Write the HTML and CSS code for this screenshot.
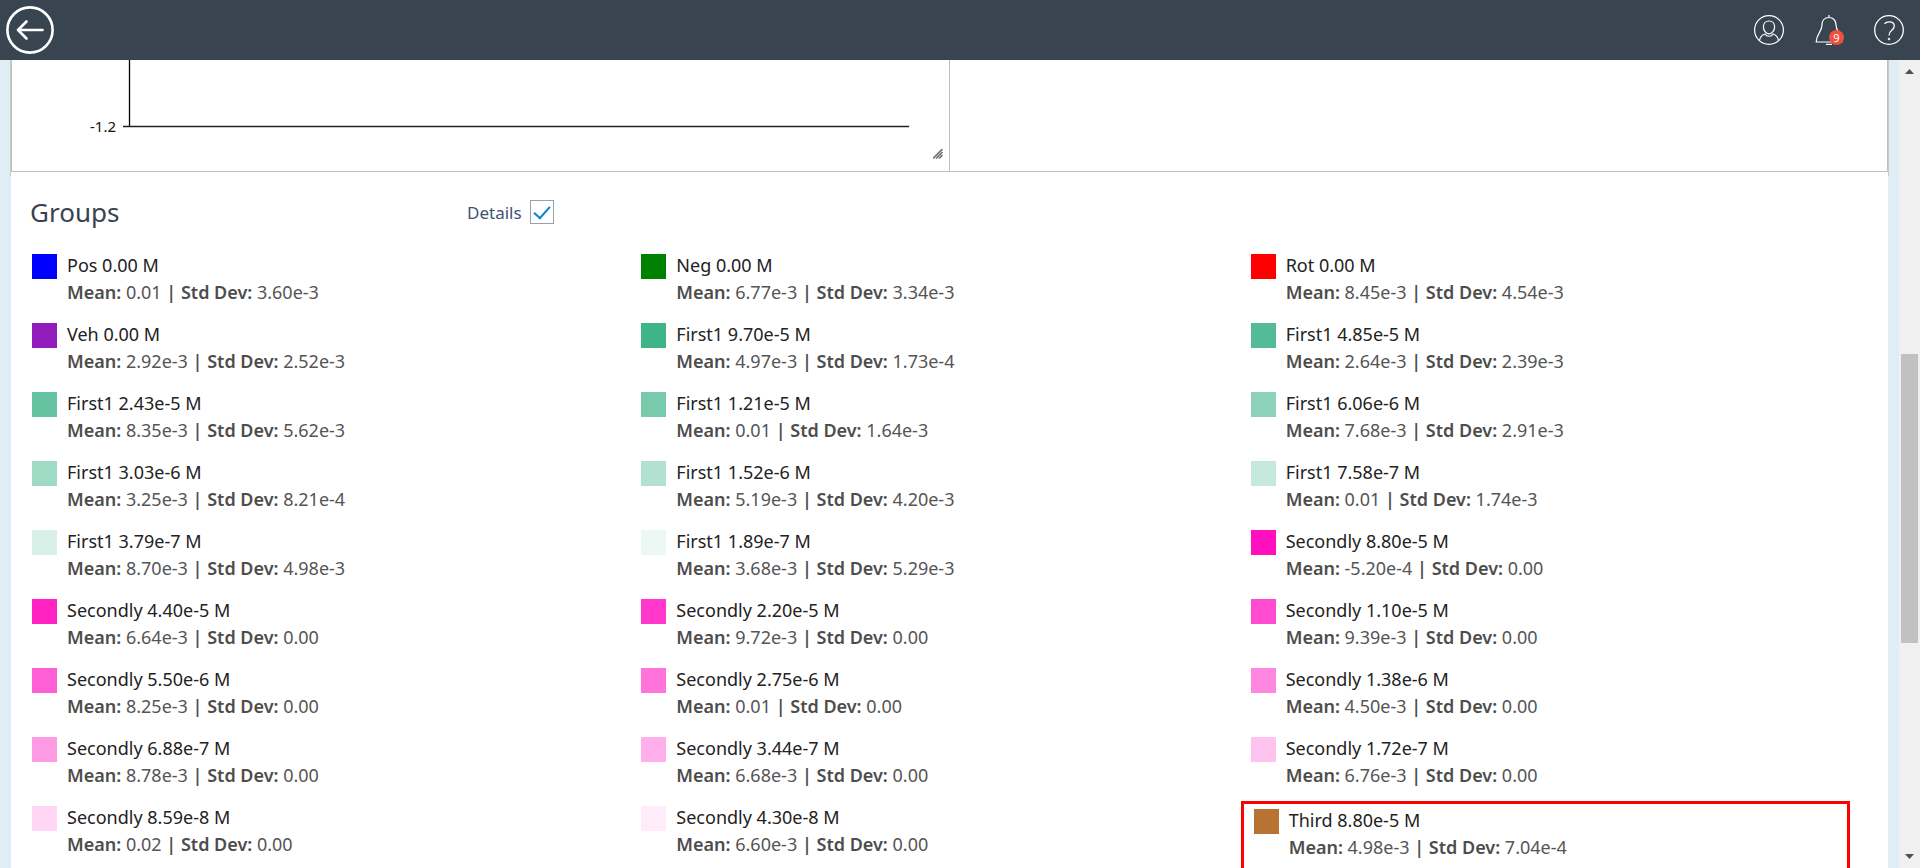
FILE: index.html
```
<!DOCTYPE html>
<html lang="en">
<head>
<meta charset="utf-8">
<title>Groups</title>
<link rel="stylesheet" href="styles.css">
</head>
<body>
<header class="topbar">
  <button class="icon-button" type="button" aria-label="Back">
    <svg width="48" height="48" viewBox="0 0 48 48" fill="none" stroke="#fff" stroke-width="2.6" stroke-linecap="round" stroke-linejoin="round"><circle cx="24" cy="24" r="22.6"/><path d="M36.500 24H12M20.500 15.500L12 24l8.500 8.500"/></svg>
  </button>
  <nav class="topbar-tools">
    <button class="icon-button" type="button" aria-label="Account">
      <svg width="30" height="30" viewBox="0 0 30 30" fill="none" stroke="#fff" stroke-width="1.200"><circle cx="15" cy="15" r="14.400"/><path d="M15 6c-3.400 0-5.600 2.400-5.600 5.800 0 3.600 2.600 7 5.600 7s5.600-3.400 5.600-7C20.600 8.400 18.400 6 15 6zM5.500 25.500c.5-3 1.500-5.300 5.500-6.500 1.500 3 6.500 3 8 0 4 1.200 5 3.500 5.500 6.500"/></svg>
    </button>
    <button class="icon-button" type="button" aria-label="Notifications">
      <svg width="30" height="30" viewBox="0 0 30 30" fill="none" stroke="#fff" stroke-width="1.200"><path d="M15 0v2.500M15 2.500c-4.600 0-7 3.500-7 7.500 0 7-5.800 9-5.800 17h25.600c0-8-5.800-10-5.800-17 0-4-2.400-7.500-7-7.500zM12 29.300h6"/></svg>
      <span class="badge">9</span>
    </button>
    <button class="icon-button" type="button" aria-label="Help">
      <svg width="30" height="30" viewBox="0 0 30 30" fill="none" stroke="#fff" stroke-width="1.300"><circle cx="15" cy="15" r="14.300"/><path d="M10.500 8.800c1.200-1.300 2.800-1.900 4.700-1.900 3 0 5.100 1.500 5.100 4.200 0 2.300-1.500 3.500-3 4.700-1.500 1.100-2.300 2.200-2.300 4.700"/><circle cx="15" cy="24" r=".9" fill="#fff" stroke-width=".6"/></svg>
    </button>
  </nav>
</header>
<div class="viewport">
  <main class="page">
    <section class="charts">
      <div class="chart">
        <svg class="plot" width="100%" height="111"><path d="M117.500 0V67" stroke="#000" stroke-width="1.300"/><line x1="111" y1="66.500" x2="95.800%" y2="66.500" stroke="#222" stroke-width="1.600"/><text class="tick" x="104" y="72" text-anchor="end">-1.2</text></svg>
        <svg class="grip" width="10" height="10" viewBox="0 0 10 10" stroke="#777" stroke-width="1.700"><path d="M0 9.500L9.500 0M3 9.500L9.500 3M6 9.500L9.500 6"/></svg>
      </div>
      <div class="chart"></div>
    </section>
    <section class="groups">
      <div class="groups-head">
        <h1>Groups</h1>
        <label class="details" for="details">Details <input id="details" type="checkbox" checked></label>
      </div>
      <ul class="group-list" id="group-list"></ul>
    </section>
  </main>
  <div class="scrollbar" aria-hidden="true">
    <svg width="9" height="5" viewBox="0 0 9 5"><path d="M0 5L4.500 0 9 5z" fill="#505050"/></svg>
    <div class="track"><div class="thumb"></div></div>
    <svg width="9" height="5" viewBox="0 0 9 5"><path d="M0 0L4.500 5 9 0z" fill="#505050"/></svg>
  </div>
</div>
<script src="groups.js"></script>
</body>
</html>
```
FILE: styles.css
```
* { box-sizing: border-box; }
body {
  margin: 0;
  height: 100vh;
  display: flex;
  flex-direction: column;
  overflow: hidden;
  background: #fff;
  color: #222;
  font-family: "Noto Sans", sans-serif;
  font-size: 18px;
}
.topbar {
  flex: none;
  height: 60px;
  padding: 0 16px 0 6px;
  display: flex;
  align-items: center;
  justify-content: space-between;
  background: #38444f;
}
.topbar-tools { display: flex; gap: 30px; }
.icon-button {
  position: relative;
  display: block;
  padding: 0;
  border: 0;
  background: none;
}
.icon-button svg { display: block; }
.badge {
  position: absolute;
  right: 0;
  bottom: 0;
  width: 15px;
  height: 15px;
  border-radius: 50%;
  background: #f0503c;
  color: #fff;
  font: 11px/15px "Noto Sans", sans-serif;
  text-align: center;
}
.viewport {
  flex: 1;
  min-height: 0;
  display: flex;
  background: #e0edf5;
}
.page {
  flex: 1;
  min-width: 0;
  margin: 0 11px;
  background: #fff;
}
.charts {
  display: grid;
  grid-template-columns: 1fr 1fr;
  margin: 0 -1px;
  border-left: 1px solid #c8c8c8;
  border-right: 1px solid #c8c8c8;
  padding-bottom: 4px;
}
.chart {
  position: relative;
  height: 112px;
  border-right: 1px solid #bfbfbf;
  border-bottom: 1px solid #bfbfbf;
}
.chart:first-child { border-left: 1px solid #bfbfbf; }
.plot { display: block; }
.tick { font-size: 15px; fill: #111; }
.grip { position: absolute; right: 6px; bottom: 12px; }
.groups { padding: 15px 38px 0 11px; }
.groups-head {
  display: flex;
  align-items: center;
  height: 42px;
  padding-left: 8px;
}
h1 {
  margin: 0;
  width: 437px;
  font-size: 26px;
  font-weight: 400;
  color: #38434f;
}
.details {
  display: flex;
  align-items: center;
  gap: 8px;
  font-size: 17px;
  color: #3f5272;
}
.details input {
  appearance: none;
  width: 24px;
  height: 24px;
  margin: 0;
  border: 1px solid #98a0aa;
  background: #fff;
  display: grid;
  place-items: center;
}
.details input::before {
  content: "";
  width: 14px;
  height: 7px;
  border: solid #0a84d0;
  border-width: 0 0 2px 2px;
  transform: translateY(-2px) rotate(-48deg);
}
.group-list {
  list-style: none;
  margin: 0;
  padding: 16px 0 0;
  display: grid;
  grid-template-columns: repeat(3, 1fr);
}
.group {
  display: flex;
  gap: 10px;
  height: 69px;
  padding: 5px 10px;
}
.group.selected { border: 3px solid #f00; height: 80px; }
.swatch { flex: none; width: 25px; height: 25px; }
.name, .stats { margin: 0; line-height: 23px; white-space: nowrap; }
.stats { margin-top: 4px; color: #555; }
.stats b { font-weight: 600; color: #4d4d4d; }
.scrollbar {
  flex: none;
  width: 21px;
  padding: 9px 2px;
  display: flex;
  flex-direction: column;
  align-items: center;
  background: #f0f0f0;
}
.track { flex: 1; align-self: stretch; padding: 280px 0 211px; display: flex; }
.thumb { flex: 1; background: #c1c1c1; }
```
FILE: groups.js
```
const groups = [
  ["Pos 0.00 M", "0.01", "3.60e-3", "#0000ff"],
  ["Neg 0.00 M", "6.77e-3", "3.34e-3", "#008000"],
  ["Rot 0.00 M", "8.45e-3", "4.54e-3", "#ff0000"],
  ["Veh 0.00 M", "2.92e-3", "2.52e-3", "#901cbb"],
  ["First1 9.70e-5 M", "4.97e-3", "1.73e-4", "#3fb488"],
  ["First1 4.85e-5 M", "2.64e-3", "2.39e-3", "#53bb95"],
  ["First1 2.43e-5 M", "8.35e-3", "5.62e-3", "#66c3a1"],
  ["First1 1.21e-5 M", "0.01", "1.64e-3", "#79caad"],
  ["First1 6.06e-6 M", "7.68e-3", "2.91e-3", "#8cd2b9"],
  ["First1 3.03e-6 M", "3.25e-3", "8.21e-4", "#9fdac5"],
  ["First1 1.52e-6 M", "5.19e-3", "4.20e-3", "#b2e1d1"],
  ["First1 7.58e-7 M", "0.01", "1.74e-3", "#c5e9dd"],
  ["First1 3.79e-7 M", "8.70e-3", "4.98e-3", "#d8f0e8"],
  ["First1 1.89e-7 M", "3.68e-3", "5.29e-3", "#ebf8f4"],
  ["Secondly 8.80e-5 M", "-5.20e-4", "0.00", "#ff0fbe"],
  ["Secondly 4.40e-5 M", "6.64e-3", "0.00", "#ff23c4"],
  ["Secondly 2.20e-5 M", "9.72e-3", "0.00", "#ff37ca"],
  ["Secondly 1.10e-5 M", "9.39e-3", "0.00", "#ff4bd0"],
  ["Secondly 5.50e-6 M", "8.25e-3", "0.00", "#ff5fd5"],
  ["Secondly 2.75e-6 M", "0.01", "0.00", "#ff73da"],
  ["Secondly 1.38e-6 M", "4.50e-3", "0.00", "#ff87e0"],
  ["Secondly 6.88e-7 M", "8.78e-3", "0.00", "#ff9be5"],
  ["Secondly 3.44e-7 M", "6.68e-3", "0.00", "#ffafea"],
  ["Secondly 1.72e-7 M", "6.76e-3", "0.00", "#ffc3f0"],
  ["Secondly 8.59e-8 M", "0.02", "0.00", "#ffd7f5"],
  ["Secondly 4.30e-8 M", "6.60e-3", "0.00", "#ffebfa"],
  ["Third 8.80e-5 M", "4.98e-3", "7.04e-4", "#b87333"]
];

document.getElementById("group-list").innerHTML = groups.map(([name, mean, dev, color]) => `
  <li class="group${name.startsWith("Third") ? " selected" : ""}">
    <span class="swatch" style="background:${color}"></span>
    <div>
      <p class="name">${name}</p>
      <p class="stats"><b>Mean:</b> ${mean} <b>|</b> <b>Std Dev:</b> ${dev}</p>
    </div>
  </li>`).join("");
```
